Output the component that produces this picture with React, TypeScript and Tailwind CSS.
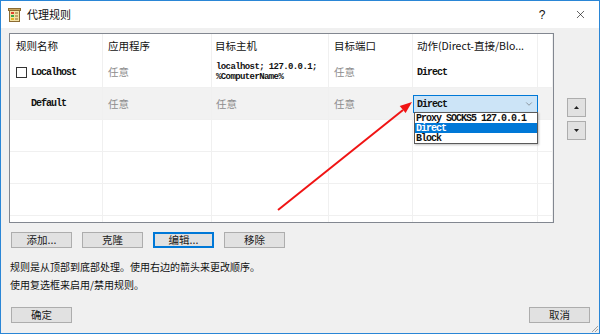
import React from 'react'
import { X, ChevronDown } from 'lucide-react'

const cjk = "'Noto Sans CJK SC', 'Noto Sans', sans-serif"
const mono = "'Liberation Mono', 'Noto Sans CJK SC', monospace"

const cols = 'grid grid-cols-[93px_109px_117px_84px_125px_15px]'

const Cell = ({ children, className = '' }: { children?: React.ReactNode; className?: string }) => (
  <div className={`border-r border-[#f0f0f0] flex items-center ${className}`}>{children}</div>
)

const Any = () => <span className="text-[10.5px] text-[#8d8d8d]">任意</span>

const Mono = ({ children, className = '' }: { children: React.ReactNode; className?: string }) => (
  <span
    className={`block text-[10px] font-bold tracking-[-1px] leading-[11px] whitespace-nowrap ${className}`}
    style={{ fontFamily: mono }}
  >
    {children}
  </span>
)

const Btn = ({ label, focused = false }: { label: string; focused?: boolean }) => (
  <button
    className={`w-[61px] h-[16px] bg-[#e1e1e1] border text-[10.5px] leading-none text-[#1a1a1a] flex items-center justify-center ${
      focused ? 'border-[#0078d7] shadow-[inset_0_0_0_1px_#0078d7]' : 'border-[#adadad]'
    }`}
  >
    {label}
  </button>
)

const Arrow = ({ up }: { up?: boolean }) => (
  <button className="w-[19px] h-[19px] bg-[#e1e1e1] border border-[#adadad] flex items-center justify-center">
    <svg width="5" height="3" viewBox="0 0 5 3">
      {up ? <polygon points="2.5,0 5,3 0,3" fill="#222" /> : <polygon points="0,0 5,0 2.5,3" fill="#222" />}
    </svg>
  </button>
)

export default function App() {
  return (
    <div
      className="relative w-[600px] h-[334px] border border-[#2a86d6] bg-[#f0f0f0] flex flex-col text-[#111] overflow-hidden"
      style={{ fontFamily: cjk }}
    >
      {/* title bar */}
      <div className="h-[27px] bg-white flex items-center pl-[7px] shrink-0">
        <svg width="13" height="14" viewBox="0 0 13 14">
          <rect x="1.5" y="0.5" width="10" height="13" fill="#f3e2a6" stroke="#8b6b32" />
          <rect x="0.5" y="0.5" width="12" height="2" fill="#c9a760" stroke="#8b6b32" />
          <rect x="3" y="4" width="3" height="2" fill="#e0432f" />
          <rect x="3" y="7" width="3" height="2" fill="#3aa845" />
          <rect x="3" y="10" width="3" height="2" fill="#e6b422" />
          <rect x="7" y="4.5" width="3" height="1" fill="#8b6b32" />
          <rect x="7" y="7.5" width="3" height="1" fill="#8b6b32" />
          <rect x="7" y="10.5" width="3" height="1" fill="#8b6b32" />
        </svg>
        <span className="ml-[6px] text-[11px]">代理规则</span>
        <div className="flex-1" />
        <span className="text-[12px] w-[12px] text-center mr-[26px]" style={{ fontFamily: "'Liberation Sans', sans-serif" }}>
          ?
        </span>
        <X className="w-[13px] h-[13px] mr-[12px]" strokeWidth={1.2} />
      </div>

      {/* body */}
      <div className="flex-1 flex flex-col pl-[8px] pt-[5px]">
        <div className="flex">
          <div className="relative w-[545px] h-[190px] border border-[#828790] bg-white">
            <div className="overflow-hidden h-full">
              {/* header */}
              <div className={`${cols} h-[23px] text-[10.5px]`}>
                <Cell className="pl-[6px]">规则名称</Cell>
                <Cell className="pl-[5px]">应用程序</Cell>
                <Cell className="pl-[3px]">目标主机</Cell>
                <Cell className="pl-[5px]">目标端口</Cell>
                <Cell className="pl-[4px]">动作(Direct-直接/Blo...</Cell>
                <Cell />
              </div>
              {/* row 1 */}
              <div className={`${cols} h-[31px] border-b border-[#f0f0f0]`}>
                <Cell className="pl-[6px]">
                  <span className="w-[11px] h-[11px] border border-[#333] bg-white" />
                  <Mono className="ml-[4px]">Localhost</Mono>
                </Cell>
                <Cell className="pl-[5px]"><Any /></Cell>
                <Cell className="pl-[4px]">
                  <div className="text-[9px] font-bold leading-[10px] tracking-[-0.6px]" style={{ fontFamily: mono }}>
                    <div>localhost; 127.0.0.1;</div>
                    <div>%ComputerName%</div>
                  </div>
                </Cell>
                <Cell className="pl-[5px]"><Any /></Cell>
                <Cell className="pl-[4px]"><Mono>Direct</Mono></Cell>
                <Cell />
              </div>
              {/* row 2 */}
              <div className={`${cols} h-[32px] bg-[#f2f2f2] border-b border-[#f0f0f0]`}>
                <Cell className="pl-[21px]"><Mono>Default</Mono></Cell>
                <Cell className="pl-[5px]"><Any /></Cell>
                <Cell className="pl-[4px]"><Any /></Cell>
                <Cell className="pl-[5px]"><Any /></Cell>
                <Cell />
                <Cell />
              </div>
              {[0, 1, 2, 3].map((i) => (
                <div key={i} className={`${cols} h-[32px] border-b border-[#f0f0f0]`}>
                  <Cell />
                  <Cell />
                  <Cell />
                  <Cell />
                  <Cell />
                  <Cell />
                </div>
              ))}
            </div>

            {/* open combo box */}
            <div className="absolute left-[403px] top-[61px] w-[125px] h-[18px] border border-[#0078d7] bg-[#cce4f7] flex items-center pl-[3px]">
              <Mono>Direct</Mono>
              <ChevronDown className="ml-auto mr-[3px] w-[10px] h-[10px] text-[#555]" strokeWidth={1.3} />
            </div>
            <div className="absolute left-[404px] top-[78px] w-[124px] h-[32px] border border-[#5a5a5a] bg-white shadow-[1px_1px_2px_rgba(0,0,0,0.25)] flex flex-col">
              <div className="pl-[1px] h-[10px] flex items-center"><Mono>Proxy SOCKS5 127.0.0.1</Mono></div>
              <div className="pl-[1px] h-[10px] flex items-center bg-[#0078d7] text-white"><Mono>Direct</Mono></div>
              <div className="pl-[1px] h-[10px] flex items-center"><Mono>Block</Mono></div>
            </div>
          </div>

          <div className="ml-[13px] pt-[65px] flex flex-col gap-[4px]">
            <Arrow up />
            <Arrow />
          </div>
        </div>

        <div className="flex gap-[10px] ml-[2px] mt-[9px]">
          <Btn label="添加..." />
          <Btn label="克隆" />
          <Btn label="编辑..." focused />
          <Btn label="移除" />
        </div>

        <div className="ml-[1px] mt-[12px] h-[14px] leading-[14px] text-[10px]">
          规则是从顶部到底部处理。使用右边的箭头来更改顺序。
        </div>
        <div className="ml-[1px] mt-[4px] h-[14px] leading-[14px] text-[10px]">使用复选框来启用/禁用规则。</div>

        <div className="flex mt-[15px] ml-[2px] mr-[9px] justify-between">
          <Btn label="确定" />
          <Btn label="取消" />
        </div>
      </div>

      {/* resize grip */}
      <svg className="absolute right-0 bottom-0" width="9" height="9" viewBox="0 0 9 9">
        <path d="M8 2 L2 8 M8 5 L5 8" stroke="#a0a0a0" strokeWidth="1" />
      </svg>

      {/* red annotation arrow */}
      <svg className="absolute left-[-1px] top-[-1px] pointer-events-none" width="600" height="334" viewBox="0 0 600 334">
        <line x1="278" y1="210" x2="403" y2="110" stroke="#f01414" strokeWidth="2" />
        <polygon points="412,102 405.6,113 399.7,105.9" fill="#f01414" />
      </svg>
    </div>
  )
}
